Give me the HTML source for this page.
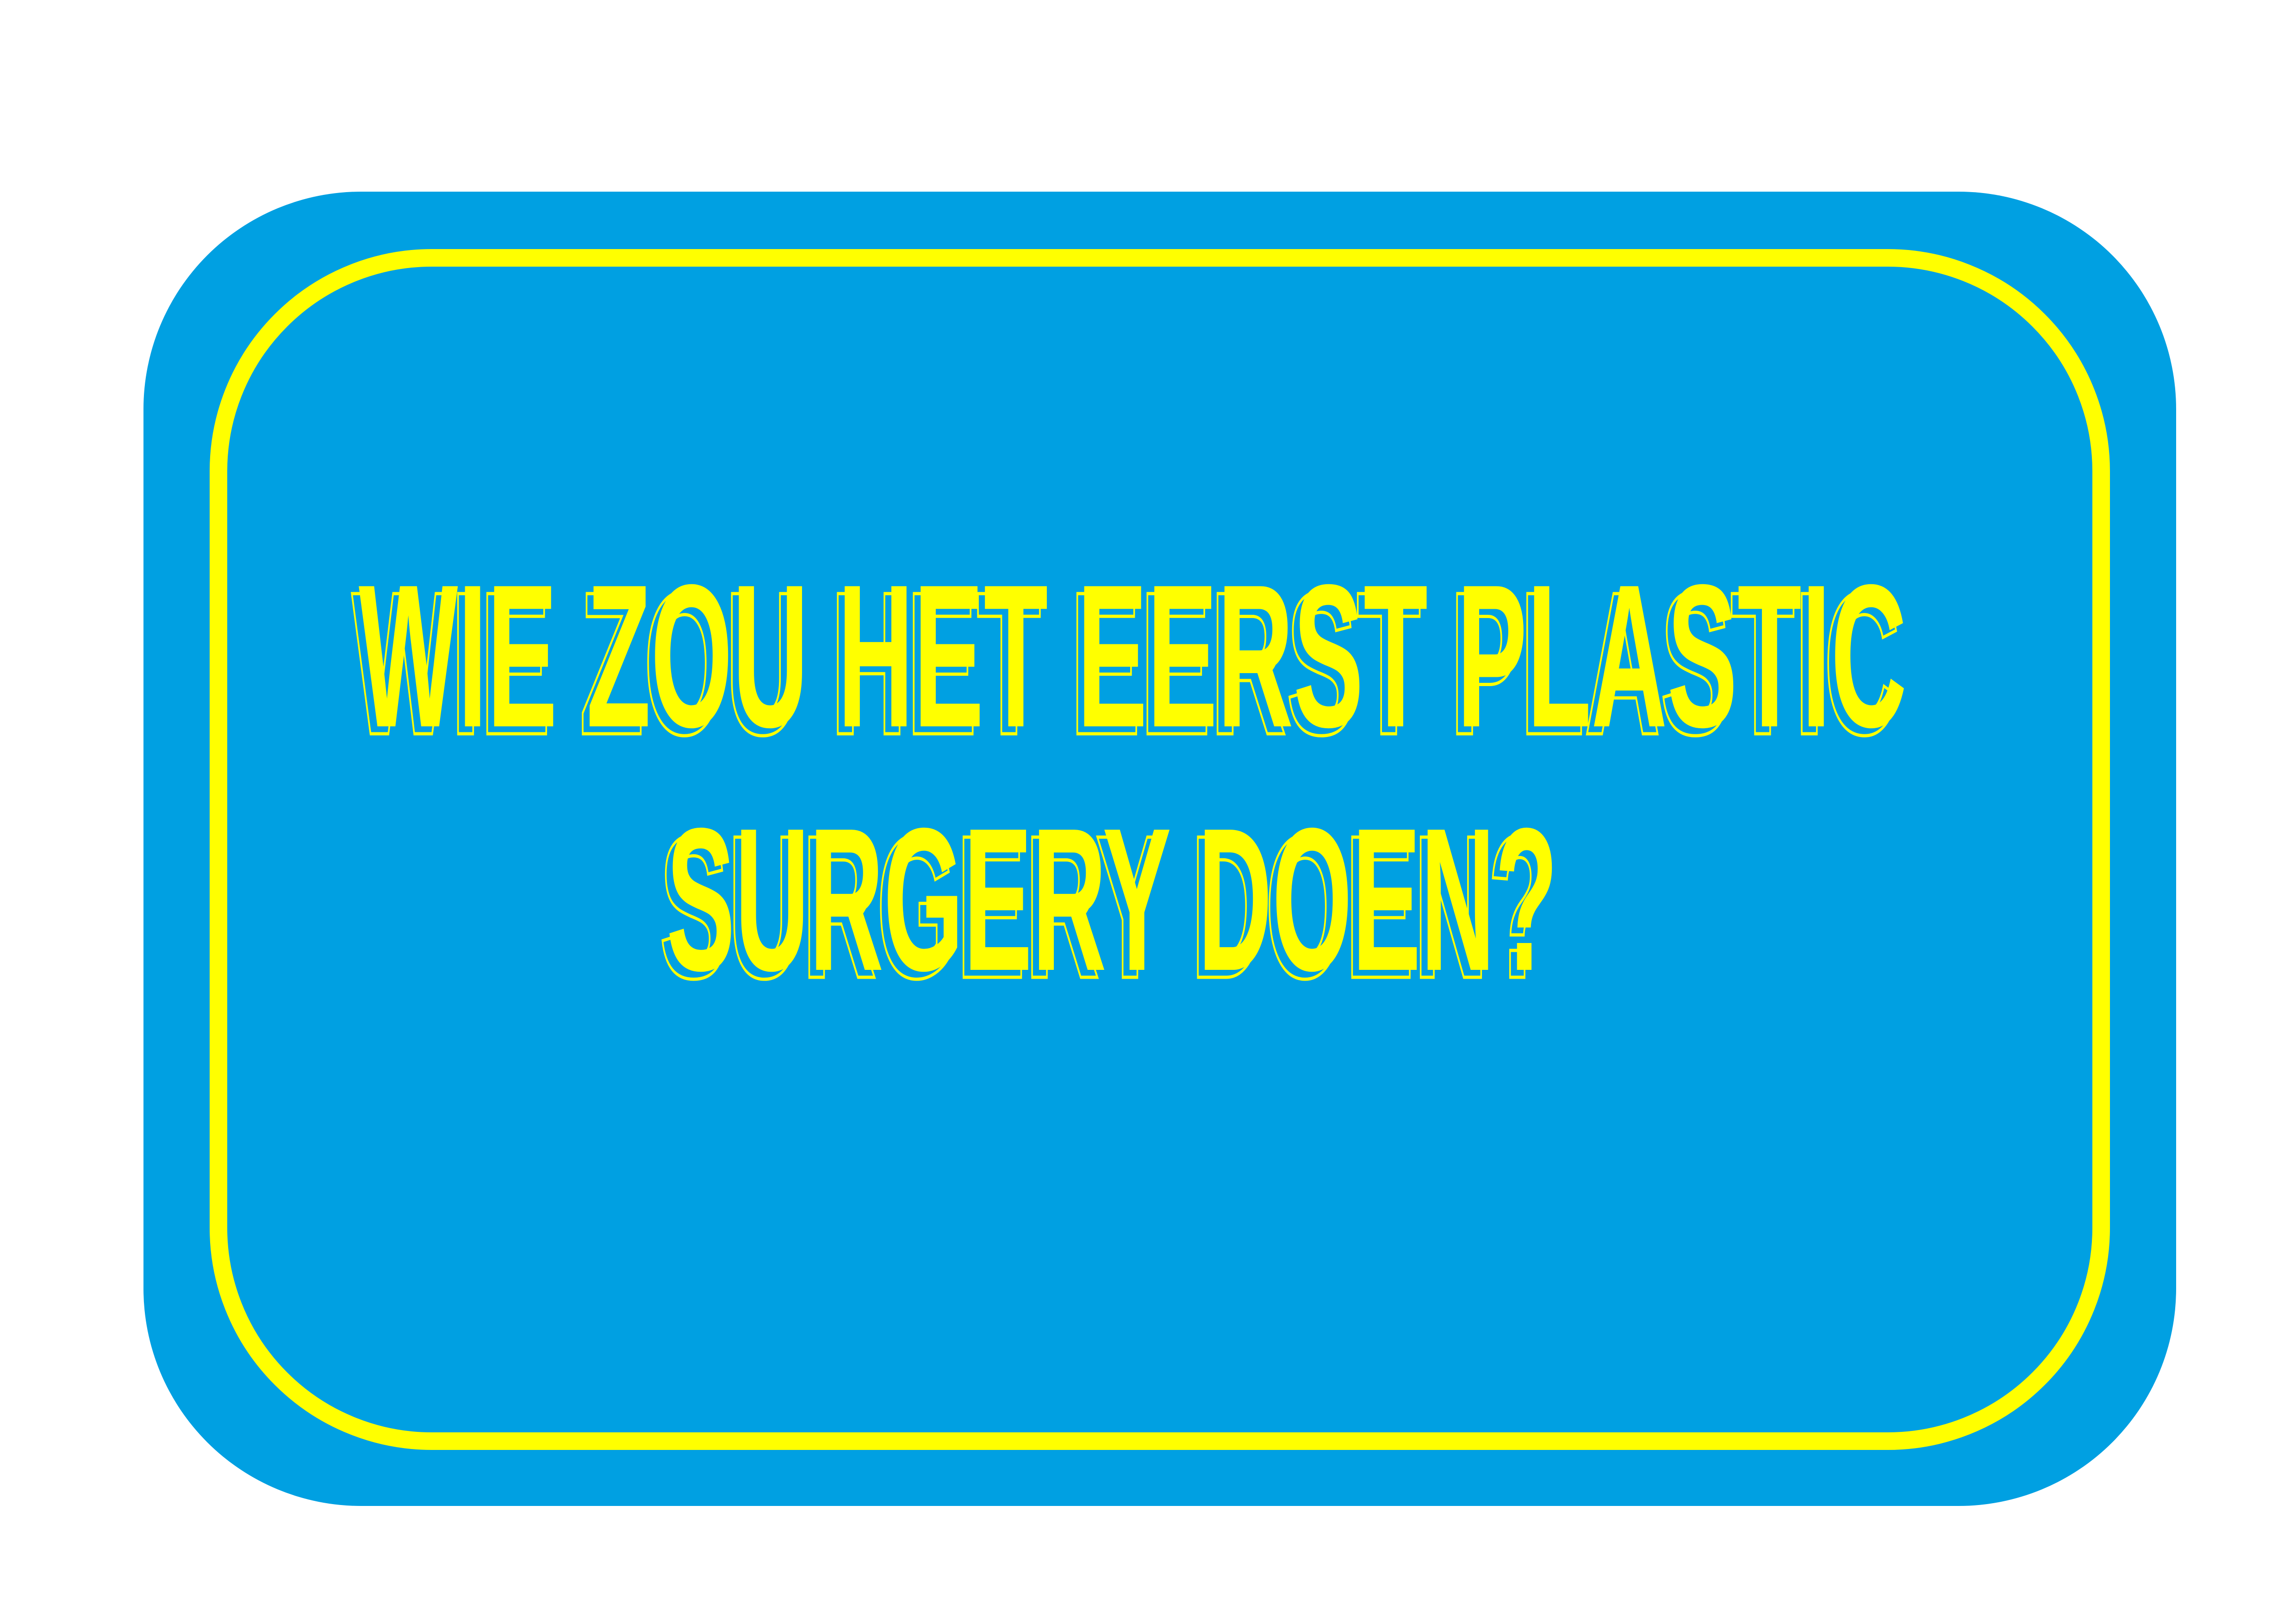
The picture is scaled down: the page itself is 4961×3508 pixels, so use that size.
<!DOCTYPE html>
<html>
<head>
<meta charset="utf-8">
<style>
html,body{margin:0;padding:0;background:#fff;}
body{width:4961px;height:3508px;position:relative;overflow:hidden;}
.card{position:absolute;left:310px;top:414px;width:4392px;height:2839px;background:#00a0e2;border-radius:470px;}
.inner{position:absolute;left:453px;top:538px;width:4106px;height:2594px;border:38px solid #ffff00;border-radius:480px;box-sizing:border-box;}
svg{position:absolute;left:0;top:0;}
</style>
</head>
<body>
<div class="card"></div>
<div class="inner"></div>
<svg width="4961" height="3508" viewBox="0 0 4961 3508">
  <g font-family="'Liberation Sans Narrow','Liberation Sans',sans-serif" font-weight="bold" font-size="440">
    <text x="760" y="1585" textLength="3345" lengthAdjust="spacingAndGlyphs" fill="#00a0e2" stroke="#ffff00" stroke-width="7">WIE ZOU HET EERST PLASTIC</text>
    <text x="775" y="1569" textLength="3345" lengthAdjust="spacingAndGlyphs" fill="#ffff00">WIE ZOU HET EERST PLASTIC</text>
    <text x="1425" y="2111" textLength="1926" lengthAdjust="spacingAndGlyphs" fill="#00a0e2" stroke="#ffff00" stroke-width="7">SURGERY DOEN?</text>
    <text x="1440" y="2095" textLength="1926" lengthAdjust="spacingAndGlyphs" fill="#ffff00">SURGERY DOEN?</text>
  </g>
</svg>
</body>
</html>
